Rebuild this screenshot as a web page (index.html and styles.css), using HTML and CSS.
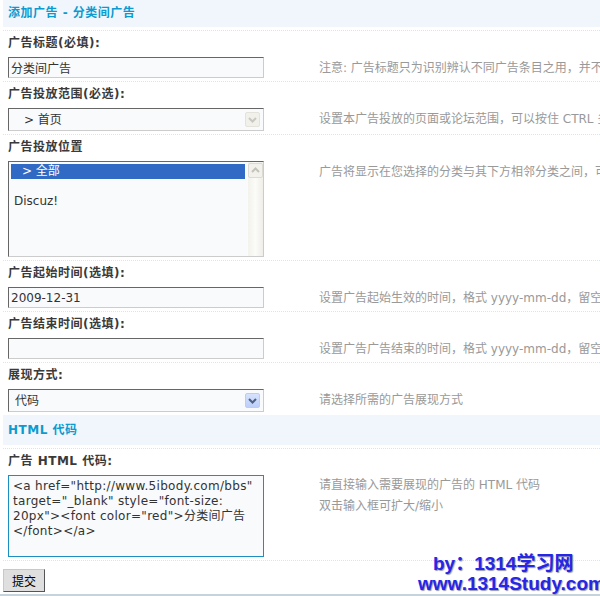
FILE: index.html
```html
<!DOCTYPE html>
<html lang="zh-CN">
<head>
  <meta charset="UTF-8">
  <title>添加广告 - 分类间广告</title>
  <link rel="stylesheet" href="styles.css">
</head>
<body>
  <div class="page">
    <form class="ad-form" onsubmit="return false">
      <table class="tb">
        <tr><th colspan="2" class="partition">添加广告 - 分类间广告</th></tr>

        <tr><td colspan="2" class="td27">广告标题(必填):</td></tr>
        <tr>
          <td class="rowform"><input class="txt" type="text" value="分类间广告"></td>
          <td class="tips2">注意: 广告标题只为识别辨认不同广告条目之用，并不会在广告中显示</td>
        </tr>

        <tr><td colspan="2" class="td27">广告投放范围(必选):</td></tr>
        <tr>
          <td class="rowform">
            <div class="select range">
              <span class="select-value">&gt; 首页</span>
              <span class="select-arrow disabled">
                <svg width="15" height="15" viewBox="0 0 15 15"><path d="M4 6 L7.5 9.5 L11 6" fill="none" stroke="#c9c8c0" stroke-width="2"/></svg>
              </span>
            </div>
          </td>
          <td class="tips2">设置本广告投放的页面或论坛范围，可以按住 CTRL 多选</td>
        </tr>

        <tr><td colspan="2" class="td27">广告投放位置</td></tr>
        <tr>
          <td class="rowform">
            <div class="listbox">
              <div class="listbox-options">
                <div class="option selected">&gt; 全部</div>
                <div class="option"></div>
                <div class="option group">Discuz!</div>
              </div>
              <div class="scrollbar">
                <span class="scroll-btn">
                  <svg width="15" height="15" viewBox="0 0 15 15"><path d="M4 9 L7.5 5.5 L11 9" fill="none" stroke="#c4c3bb" stroke-width="2"/></svg>
                </span>
              </div>
            </div>
          </td>
          <td class="tips2">广告将显示在您选择的分类与其下方相邻分类之间，可以按住 CTRL 多选</td>
        </tr>

        <tr><td colspan="2" class="td27">广告起始时间(选填):</td></tr>
        <tr>
          <td class="rowform"><input class="txt" type="text" value="2009-12-31"></td>
          <td class="tips2">设置广告起始生效的时间，格式 yyyy-mm-dd，留空为不限制起始时间</td>
        </tr>

        <tr><td colspan="2" class="td27">广告结束时间(选填):</td></tr>
        <tr>
          <td class="rowform"><input class="txt" type="text" value=""></td>
          <td class="tips2">设置广告广告结束的时间，格式 yyyy-mm-dd，留空为不限制结束时间</td>
        </tr>

        <tr><td colspan="2" class="td27">展现方式:</td></tr>
        <tr>
          <td class="rowform">
            <div class="select style">
              <span class="select-value">代码</span>
              <span class="select-arrow">
                <svg width="15" height="15" viewBox="0 0 15 15"><path d="M4 6 L7.5 9.5 L11 6" fill="none" stroke="#4d6185" stroke-width="2"/></svg>
              </span>
            </div>
          </td>
          <td class="tips2">请选择所需的广告展现方式</td>
        </tr>

        <tr><th colspan="2" class="partition tall">HTML 代码</th></tr>

        <tr><td colspan="2" class="td27">广告 HTML 代码:</td></tr>
        <tr>
          <td class="rowform">
            <textarea class="code" rows="5">&lt;a href="http://www.5ibody.com/bbs"
target="_blank" style="font-size:
20px"&gt;&lt;font color="red"&gt;分类间广告
&lt;/font&gt;&lt;/a&gt;</textarea>
          </td>
          <td class="tips2 multi">请直接输入需要展现的广告的 HTML 代码<br>双击输入框可扩大/缩小</td>
        </tr>

        <tr>
          <td colspan="2" class="td-submit"><button class="btn" type="submit">提交</button></td>
        </tr>
      </table>
    </form>
  </div>
  <div class="footer-line"></div>

  <div class="watermark">
    <div class="wm-by">by：1314学习网</div>
    <div class="wm-url">www.1314Study.com</div>
  </div>
</body>
</html>
```

FILE: styles.css
```css
* {
  margin: 0;
  padding: 0;
  box-sizing: border-box;
}

html, body {
  overflow: hidden;
}

body {
  position: relative;
  font: 12px/1.5 "DejaVu Sans", "Noto Sans CJK SC", sans-serif;
  color: #333;
  background: #fff;
}

.page {
  width: 1000px;
  padding-left: 3px;
}

.tb {
  width: 100%;
  border-collapse: separate;
  border-spacing: 0;
}

.partition {
  padding: 0 5px;
  line-height: 27px;
  background: #f1f6fd;
  border-bottom: 3px solid #fff;
  color: #0a9bd0;
  font-weight: bold;
  text-align: left;
  letter-spacing: 0.5px;
}

.partition.tall {
  line-height: 30px;
}

.td27 {
  padding: 3px 5px 5px;
  line-height: 18px;
  border-top: 1px dotted #d6e6f4;
  color: #3a3a3a;
  font-weight: bold;
  letter-spacing: 0.5px;
}

.rowform {
  width: 311px;
  padding: 0 5px 3px;
  vertical-align: top;
}

.tips2 {
  padding: 1px 0 0 5px;
  line-height: 20px;
  color: #999;
  white-space: nowrap;
  vertical-align: top;
}

.tips2.multi {
  padding-top: 0;
  line-height: 21px;
}

.txt {
  display: block;
  width: 256px;
  height: 21px;
  padding: 0 2px;
  border: 1px solid;
  border-color: #666 #ccc #ccc #666;
  background: #f9fafc;
  font: 12px "DejaVu Sans", "Noto Sans CJK SC", sans-serif;
  color: #333;
  outline: none;
}

.select {
  display: flex;
  align-items: center;
  justify-content: space-between;
  width: 256px;
  height: 23px;
  padding: 0 3px 0 15px;
  border: 1px solid;
  border-color: #666 #ccc #ccc #666;
  background: #f9fafc;
  color: #333;
}

.select.style {
  padding-left: 6px;
}

.select-arrow {
  display: flex;
  width: 15px;
  height: 15px;
  border: 1px solid #b9cdf7;
  border-radius: 2px;
  background: linear-gradient(#d6e2fd, #bccffa);
}

.select-arrow svg {
  margin: -1px;
}

.select-arrow.disabled {
  border-color: #e3e2db;
  background: #f1f0eb;
}

.listbox {
  display: flex;
  width: 256px;
  height: 96px;
  border: 1px solid;
  border-color: #666 #ccc #ccc #666;
  background: #f9fafc;
  color: #333;
}

.listbox-options {
  flex: 1;
  padding: 2px;
}

.option {
  height: 15px;
  line-height: 15px;
  padding-left: 11px;
}

.option.selected {
  background: #316ac5;
  color: #fff;
}

.option.group {
  padding-left: 3px;
}

.scrollbar {
  width: 16px;
  padding: 1px 1px 0 0;
  border-left: 1px solid #fbfbf8;
  background: linear-gradient(90deg, #f3f2ec, #fbfbf8 50%, #efeee7);
}

.scroll-btn {
  display: flex;
  width: 15px;
  height: 15px;
  border: 1px solid #dcdbd3;
  border-radius: 2px;
  background: #f2f1eb;
}

.scroll-btn svg {
  margin: -1px;
}

.code {
  display: block;
  width: 256px;
  height: 82px;
  padding: 3px 4px;
  border: 1px solid #1b8fc2;
  background: #f9fafc;
  font: 12px/15px "DejaVu Sans", "Noto Sans CJK SC", sans-serif;
  letter-spacing: 0.3px;
  color: #333;
  white-space: pre;
  overflow: hidden;
  resize: none;
  outline: none;
}

.td-submit {
  padding: 8px 0 2px;
  border-top: 1px dotted #d6e6f4;
}

.btn {
  display: block;
  width: 42px;
  height: 23px;
  border: 1px solid;
  border-color: #c8c8c8 #555 #555 #c8c8c8;
  background: #dfdfdf;
  font: 12px "Noto Sans CJK SC", sans-serif;
  color: #000;
}

.footer-line {
  height: 2px;
  background: #c6d3db;
}

.watermark {
  position: absolute;
  left: 418px;
  top: 554px;
  font: bold 19px/20px "Liberation Sans", "Noto Sans CJK SC", sans-serif;
  color: #2626e8;
  text-shadow: 1px 1px 1px #9a9aa8;
  white-space: nowrap;
}

.wm-by {
  padding-left: 15px;
}
```
